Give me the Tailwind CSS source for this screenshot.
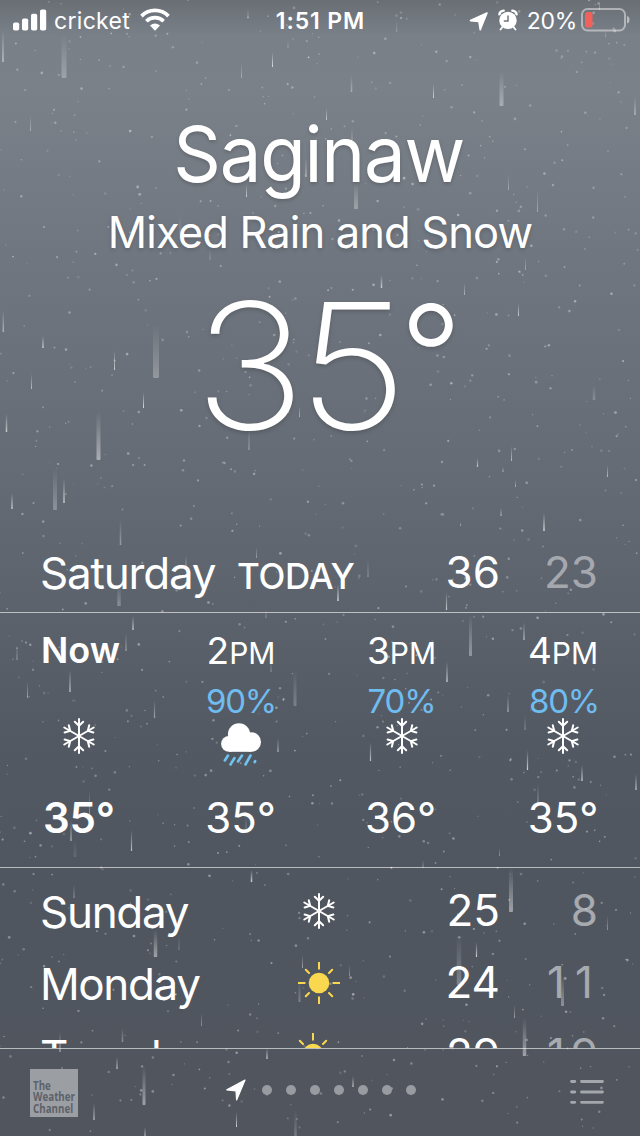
<!DOCTYPE html>
<html lang="en">
<head>
<meta charset="utf-8">
<title>Weather</title>
<script src="https://cdn.jsdelivr.net/npm/@tailwindcss/browser@4"></script>
</head>
<body class="w-[640px] h-[1136px] overflow-hidden text-white font-['Inter','Liberation_Sans',sans-serif]">
<svg class="hidden">
  <defs>
    <symbol id="snow" viewBox="-18 -18 36 36">
      <g fill="none" stroke="#fff" stroke-width="2" stroke-linecap="round">
        <g id="arm"><path d="M0 0V-17M-4.2 -14.2L0 -10.2L4.2 -14.2"/></g>
        <use href="#arm" transform="rotate(60)"/><use href="#arm" transform="rotate(120)"/><use href="#arm" transform="rotate(180)"/><use href="#arm" transform="rotate(240)"/><use href="#arm" transform="rotate(300)"/>
      </g>
    </symbol>
    <symbol id="sun" viewBox="-21 -21 42 42">
      <circle r="10.3" fill="#f9d74f"/>
      <path d="M0-20.5V-14.3M0 20.5V14.3M-20.5 0H-14.3M20.5 0H14.3M-13.2-13.2L-10-10M13.2-13.2L10-10M-13.2 13.2L-10 10M13.2 13.2L10 10" stroke="#f9d74f" stroke-width="2" stroke-linecap="round"/>
    </symbol>
  </defs>
</svg>
<div class="relative w-[640px] h-[1136px] overflow-hidden bg-[linear-gradient(180deg,#696e75_0px,#7a8088_36px,#7b8189_90px,#70767f_260px,#666c75_460px,#5d636d_600px,#535963_740px,#50565f_880px,#50555e_1136px)]">
  <svg id="sky" class="absolute inset-0 size-full" viewBox="0 0 640 1136">
    <defs><linearGradient id="fall" x1="0" y1="0" x2="0" y2="1"><stop offset="0" stop-color="#fff" stop-opacity="0"/><stop offset="1" stop-color="#fff"/></linearGradient></defs>
  </svg>

  <div class="relative flex h-full flex-col">
    <header class="flex h-[41px] shrink-0 items-center justify-between pl-[13px] pr-[10px]">
      <div class="flex w-[220px] items-center">
        <svg class="-mt-px h-[22px] w-[34px]" viewBox="0 0 34 22" fill="#fff"><rect y="13.5" width="6.2" height="8" rx="1.8"/><rect x="9" y="9.5" width="6.2" height="12" rx="1.8"/><rect x="18" y="4.8" width="6.2" height="16.7" rx="1.8"/><rect x="27" y=".5" width="6.2" height="21" rx="1.8"/></svg>
        <span class="ml-[7px] w-[86px] pt-px text-[23px] leading-[40px] tracking-[0.3px] whitespace-nowrap">cricket</span>
        <svg class="-mt-[2px] h-[23px] w-[30px]" viewBox="0 0 30 23" fill="none" stroke="#fff" stroke-width="3.7"><path d="M1.5 8.1A19 19 0 0 1 28.5 8.1M6.4 13.3A12 12 0 0 1 23.6 13.3"/><path d="M10 17.6Q15 13.2 20 17.6L15 22.8Z" fill="#fff" stroke="none"/></svg>
      </div>
      <span class="pt-px pr-[2px] text-[23px] leading-[42px] font-semibold tracking-[0.9px] whitespace-nowrap">1:51 PM</span>
      <div class="flex w-[220px] items-center justify-end">
        <svg class="mr-[9px] h-[20px] w-[20px]" viewBox="0 0 20 20"><path d="M18 2L1.5 9.6L9.9 10.4L11.2 18.6Z" fill="#fff" stroke="#fff" stroke-width="1.6" stroke-linejoin="round"/></svg>
        <svg class="-mt-[2px] mr-[9px] h-[22px] w-[20px]" viewBox="0 0 20 22"><circle cx="10" cy="11.4" r="8.7" fill="#fff"/><path d="M1.4 5.3Q1.8 2 5.7 1.6M18.6 5.3Q18.2 2 14.3 1.6" fill="none" stroke="#fff" stroke-width="2.4" stroke-linecap="round"/><path d="M4.5 18L2.5 20.5M15.5 18L17.5 20.5" stroke="#fff" stroke-width="1.8" stroke-linecap="round"/><path d="M10 6.4V12H5.8" fill="none" stroke="#70757d" stroke-width="1.5"/></svg>
        <span class="pt-px text-[23px] leading-[40px] tracking-[-0.3px] whitespace-nowrap">20%</span>
        <svg class="-mt-px ml-[4px] h-[24px] w-[49px]" viewBox="0 0 49 24"><rect x="1" y="1" width="43" height="21.5" rx="5.5" fill="none" stroke="#fff" stroke-opacity=".45" stroke-width="2"/><rect x="4" y="4" width="7.5" height="15.5" rx="2.5" fill="#f2605c"/><path d="M46 8Q48.5 8.5 48.5 11.7T46 15.5Z" fill="#fff" fill-opacity=".5"/></svg>
      </div>
    </header>

    <section class="flex h-[499px] shrink-0 flex-col items-center pt-[63px] [text-shadow:0_2px_4px_rgb(0_0_0/0.18)]">
      <h1 class="h-[99px] scale-x-[0.965] pr-[3px] text-[77px] leading-[100px] font-normal tracking-[-1.3px]">Saginaw</h1>
      <p class="h-[58px] text-[43.5px] leading-[58px] tracking-[-0.88px] whitespace-nowrap">Mixed Rain and Snow</p>
      <div class="grid h-[208px] w-[260px] grid-cols-[107px_98px_55px] text-center text-[175px] leading-[208px] font-extralight">
        <span class="ml-[13px] scale-x-[1.07] justify-self-center">3</span>
        <span class="ml-[14px] scale-x-[1.09] justify-self-center">5</span>
        <span class="ml-[17px] justify-self-center text-[137px] leading-[187px] font-light">°</span>
      </div>
    </section>

    <section class="flex h-[73px] shrink-0 items-center border-b border-white/60 pr-[42px] pb-[8px] pl-[40px] text-[44px] leading-[64px]">
      <span class="w-[197px] pt-[2px] font-[370] tracking-[-1.2px] whitespace-nowrap">Saturday</span>
      <span class="mt-[7px] text-[35px] font-medium tracking-[-0.3px]">TODAY</span>
      <span class="ml-auto w-[80px] text-right font-[370]">36</span>
      <span class="w-[98px] text-right font-[370] text-white/45">23</span>
    </section>

    <section class="grid h-[255px] shrink-0 grid-cols-[158px_166px_155px_161px] border-b border-white/60 text-center">
      <div class="flex flex-col items-center pt-[12px]">
        <span class="h-[51px] pl-[3px] text-[36px] leading-[51px] font-semibold">Now</span>
        <span class="h-[51px]"></span>
        <svg class="mt-[-9px] size-[36px]"><use href="#snow"/></svg>
        <span class="mt-[38px] text-[42px] leading-[52px] font-semibold">35°</span>
      </div>
      <div class="flex flex-col items-center pt-[12px]">
        <span class="h-[51px] text-[37px] leading-[51px] font-[370]">2<span class="text-[30px]">PM</span></span>
        <span class="h-[51px] text-[33px] leading-[51px] font-[370] tracking-[-1.2px] text-[#6fbcf0]">90%</span>
        <svg class="mt-[-4px] h-[44px] w-[42px]" viewBox="0 0 42 44"><g fill="#fff"><circle cx="19" cy="11.4" r="11.1"/><circle cx="31.2" cy="19" r="9.8"/><circle cx="9" cy="20.9" r="7.9"/><rect x="9" y="15" width="22.5" height="13.8"/></g><path d="M8 32.5L4.8 37.5M14.5 35L10.5 41.5M22 32.5L18 38.5M30.5 32.5L25.5 41.5M35.2 38.2L34.7 39.2" stroke="#6fc3ee" stroke-width="2.6" stroke-linecap="round"/></svg>
        <span class="mt-[25px] pr-px text-[42px] leading-[52px] font-[370]">35°</span>
      </div>
      <div class="flex flex-col items-center pt-[12px]">
        <span class="h-[51px] text-[37px] leading-[51px] font-[370]">3<span class="text-[30px]">PM</span></span>
        <span class="h-[51px] text-[33px] leading-[51px] font-[370] tracking-[-1.2px] text-[#6fbcf0]">70%</span>
        <svg class="mt-[-9px] size-[36px]"><use href="#snow"/></svg>
        <span class="mt-[38px] pr-[2px] text-[42px] leading-[52px] font-[370]">36°</span>
      </div>
      <div class="flex flex-col items-center pt-[12px] pl-[7px]">
        <span class="h-[51px] text-[37px] leading-[51px] font-[370]">4<span class="text-[30px]">PM</span></span>
        <span class="h-[51px] pl-[2px] text-[33px] leading-[51px] font-[370] tracking-[-1.2px] text-[#6fbcf0]">80%</span>
        <svg class="mt-[-9px] size-[36px]"><use href="#snow"/></svg>
        <span class="mt-[38px] text-[42px] leading-[52px] font-[370]">35°</span>
      </div>
    </section>

    <section class="h-[181px] shrink-0 overflow-hidden border-b border-white/60 pt-[6px] text-[44px] leading-[70px] font-[370]">
      <div class="grid h-[72px] grid-cols-[240px_78px_142px_98px] grid-rows-[72px] items-center pl-[40px]"><span class="pt-[3px] tracking-[-1.3px]">Sunday</span><svg class="mt-px size-[36px] justify-self-center"><use href="#snow"/></svg><span class="text-right">25</span><span class="text-right text-white/50">8</span></div>
      <div class="grid h-[72px] grid-cols-[240px_78px_142px_98px] grid-rows-[72px] items-center pl-[40px]"><span class="pt-[3px] tracking-[-1.4px]">Monday</span><svg class="mt-px size-[42px] justify-self-center"><use href="#sun"/></svg><span class="text-right">24</span><span class="flex justify-end text-white/50"><span class="w-[28px] text-center">1</span><span class="w-[28px] text-center">1</span></span></div>
      <div class="grid h-[72px] grid-cols-[240px_78px_142px_98px] grid-rows-[72px] items-center pl-[40px]"><span class="pt-[3px] tracking-[-1.3px]">Tuesday</span><svg class="mr-[12px] size-[42px] justify-self-center"><use href="#sun"/></svg><span class="text-right">29</span><span class="flex justify-end text-white/50"><span class="w-[28px] text-center">1</span><span class="w-[28px] text-right">9</span></span></div>
    </section>

    <footer class="flex h-[87px] items-center justify-between pr-[36px] pb-px pl-[30px]">
      <div class="mt-[2px] flex size-[48px] flex-col justify-end bg-[#9b9ea3] pb-[3px] pl-[3px]">
        <p class="w-[50px] origin-left scale-x-[0.85] font-['Open_Sans',sans-serif] text-[11.5px] leading-[11.3px] font-bold text-[#5d626a]">The<br>Weather<br>Channel</p>
      </div>
      <div class="-mt-[5px] flex items-center gap-[14px] pr-[6px]">
        <svg class="mr-[2px] h-[22px] w-[20px]" viewBox="0 0 20 22"><path d="M19 1L.8 10.8L10 12L10.6 21Z" fill="#fff" stroke="#fff" stroke-width="1.2" stroke-linejoin="round"/></svg>
        <i class="size-[10px] rounded-full bg-[#989ba0]"></i><i class="size-[10px] rounded-full bg-[#989ba0]"></i><i class="size-[10px] rounded-full bg-[#989ba0]"></i><i class="size-[10px] rounded-full bg-[#989ba0]"></i><i class="size-[10px] rounded-full bg-[#989ba0]"></i><i class="size-[10px] rounded-full bg-[#989ba0]"></i><i class="size-[10px] rounded-full bg-[#989ba0]"></i>
      </div>
      <svg class="h-[26px] w-[34px]" viewBox="0 0 34 26" stroke="#a4a7ac" stroke-width="2.8" stroke-linecap="round"><path d="M1.5 2.5H4.8M11.5 2.5H32.5M1.5 13H4.8M11.5 13H32.5M1.5 23.3H4.8M11.5 23.3H32.5"/></svg>
    </footer>
  </div>
</div>
<script>
// Falling rain streaks: x, top, bottom, width, opacity
const streaks = [[3,30,62,1.5,.6],[64,35,78,5,.3],[248,8,18,1,.4],[272.5,52,67,1,.8],[241.5,63,78,1,.4],[288,40,48,1,.3],[396.7,20,32,1,.3],[351.5,75,92,1.5,.4],[433.5,83,98,1,.7],[501.5,72,106,4,.4],[635,97,115,1.5,.5],[599.5,0,10,1,.4],[605.5,30,37,1,.3],[326.5,108,120,1,.6],[352,128,140,1,.4],[246.5,185,197,1,.7],[306,158,177,1,.7],[356,182,209,4,.35],[508.5,175,190,1,.4],[537.5,190,212,1,.4],[381.5,275,288,1.5,.7],[464.5,283,295,1,.5],[518.5,303,316,1,.7],[156,325,378,6,.3],[114.5,350,370,1,.7],[143.5,392,408,1,.8],[299.5,406,417,1,.5],[249,428,450,1,.5],[525.5,257,270,1,.4],[180,215,233,1,.3],[210,248,260,1,.3],[30.5,115,131,1,.4],
[3.3,310,332,1.5,.5],[43,336,348,1.5,.7],[31.5,374,389,1,.6],[6.5,414,432,1.5,.7],[98.5,412,460,4,.5],[55,468,510,4,.3],[64,478,503,1.5,.7],[12,493,509,1.5,.7],[120.5,520,545,1.5,.4],
[594,385,400,2.5,.25],[477.5,458,467,1.2,.7],[511.5,446,461,1,.6],[607.5,465,477,1,.6],[503,467,472,1.2,.5],[515.5,480,487,1,.5],[501,508,516,1.2,.6],[544,513,531,1.5,.8],[460.5,522,526,1,.5],
[256.5,547,558,1,.4],[119,585,606,3.5,.3],[133,616,630,1.5,.7],[126,633,651,1.2,.5],[17,645,660,1.2,.4],[70,670,692,1.2,.8],[27.5,682,698,1,.5],[154.5,700,718,1.2,.5],[295,670,706,3,.25],[278,738,752,1.5,.5],[266,610,618,1,.4],[131.5,830,851,1.2,.7],[71,820,841,1,.8],[89.5,790,815,1,.4],[75,840,857,3,.12],[271,660,672,1,.4],[186,555,567,1,.5],[246,815,832,1,.4],
[338,584,601,1.5,.8],[446.5,592,610,1.2,.7],[470.5,615,656,3,.4],[524,622,640,1.2,.7],[447,662,682,1.5,.7],[508,695,712,1.2,.6],[525,715,730,1,.4],[370.5,742,761,1.2,.7],[527.5,750,770,1.2,.8],[582,765,781,1.5,.7],[636,774,790,1.2,.8],[538,784,802,1.5,.3],[499.5,848,856,1,.4],[368,560,577,1,.4],[423,860,868,1,.5],
[251.5,870,882,1.5,.8],[74,885,898,1,.5],[155.5,930,957,3.5,.5],[179,935,950,1,.3],[302.5,955,968,1,.5],[299.5,980,1002,2,.3],[201.5,1013,1026,1,.4],[122.5,1028,1042,1.5,.4],[60,1032,1052,1.5,.5],[267,1048,1059,1.5,.7],[117,1057,1069,1.3,.7],[144,1066,1105,3,.5],[94,1103,1120,1.5,.6],[236.5,1112,1127,1,.8],[295.5,1110,1136,2.5,.25],[145,1127,1136,2,.4],
[511,868,912,4,.5],[459,935,985,4.5,.3],[476.5,942,957,1.2,.8],[607.5,915,930,1,.4],[562.5,975,1006,3,.4],[514.5,1005,1018,1,.5],[524.5,1018,1056,3.5,.5],[349.5,965,976,1,.4],[353,1076,1087,1.2,.8]];
let s = 7;
const rnd = () => (s = (s * 16807) % 2147483647) / 2147483647;
let out = '';
for (const [x, a, b, w, o] of streaks) out += `<rect x="${x - w / 2}" y="${a}" width="${w}" height="${b - a}" rx="${w / 4}" fill="url(#fall)" opacity="${o * .9}"/>`;
for (let i = 0; i < 1050; i++) out += `<circle cx="${(rnd() * 640).toFixed(1)}" cy="${(rnd() * 1136).toFixed(1)}" r="${(.6 + rnd() * .8).toFixed(2)}" fill="#fff" opacity="${(.12 + rnd() * .28).toFixed(2)}"/>`;
document.getElementById('sky').insertAdjacentHTML('beforeend', out);
</script>
</body>
</html>
